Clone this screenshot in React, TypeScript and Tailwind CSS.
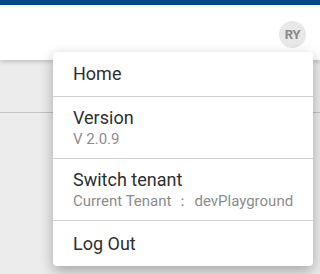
import React from 'react';

type Item = { title: string; sub?: React.ReactNode };

const items: Item[] = [
  { title: 'Home' },
  { title: 'Version', sub: 'V 2.0.9' },
  {
    title: 'Switch tenant',
    sub: (
      <>
        Current Tenant<span className="mx-[4px]">：</span>devPlayground
      </>
    ),
  },
  { title: 'Log Out' },
];

export default function App() {
  return (
    <div className="relative w-[320px] h-[274px] overflow-hidden bg-[#ececec] font-['Roboto',sans-serif]">
      {/* top strip */}
      <div className="h-[5px] bg-[#004886]" />

      {/* app bar */}
      <div className="relative z-10 h-[55px] bg-white shadow-[0_2px_4px_rgba(0,0,0,0.18)] flex items-center justify-end pr-[14px] pt-[4px]">
        <div className="w-[27px] h-[27px] rounded-full bg-[#e8e8e8] flex items-center justify-center text-[13px] font-bold text-[#8a8a8a] tracking-tight">
          RY
        </div>
      </div>

      {/* page content */}
      <div className="h-[53px] border-b border-[#c4c4c4]" />

      {/* user menu */}
      <div className="absolute z-20 left-[53px] top-[52px] w-[260px] bg-white rounded-[4px] shadow-[0_5px_14px_rgba(0,0,0,0.3)]">
        {items.map((it, i) => (
          <div
            key={it.title}
            className={`px-[20px] flex flex-col justify-center ${it.sub ? 'h-[62px]' : 'h-[45px]'} ${i < items.length - 1 ? 'border-b border-[#cfcfcf]' : ''}`}
          >
            <div className="text-[18px] leading-[22px] text-[#2e2e2e]">{it.title}</div>
            {it.sub && (
              <div className="text-[15px] leading-[20px] text-[#8c8c8c] whitespace-nowrap">{it.sub}</div>
            )}
          </div>
        ))}
      </div>
    </div>
  );
}
